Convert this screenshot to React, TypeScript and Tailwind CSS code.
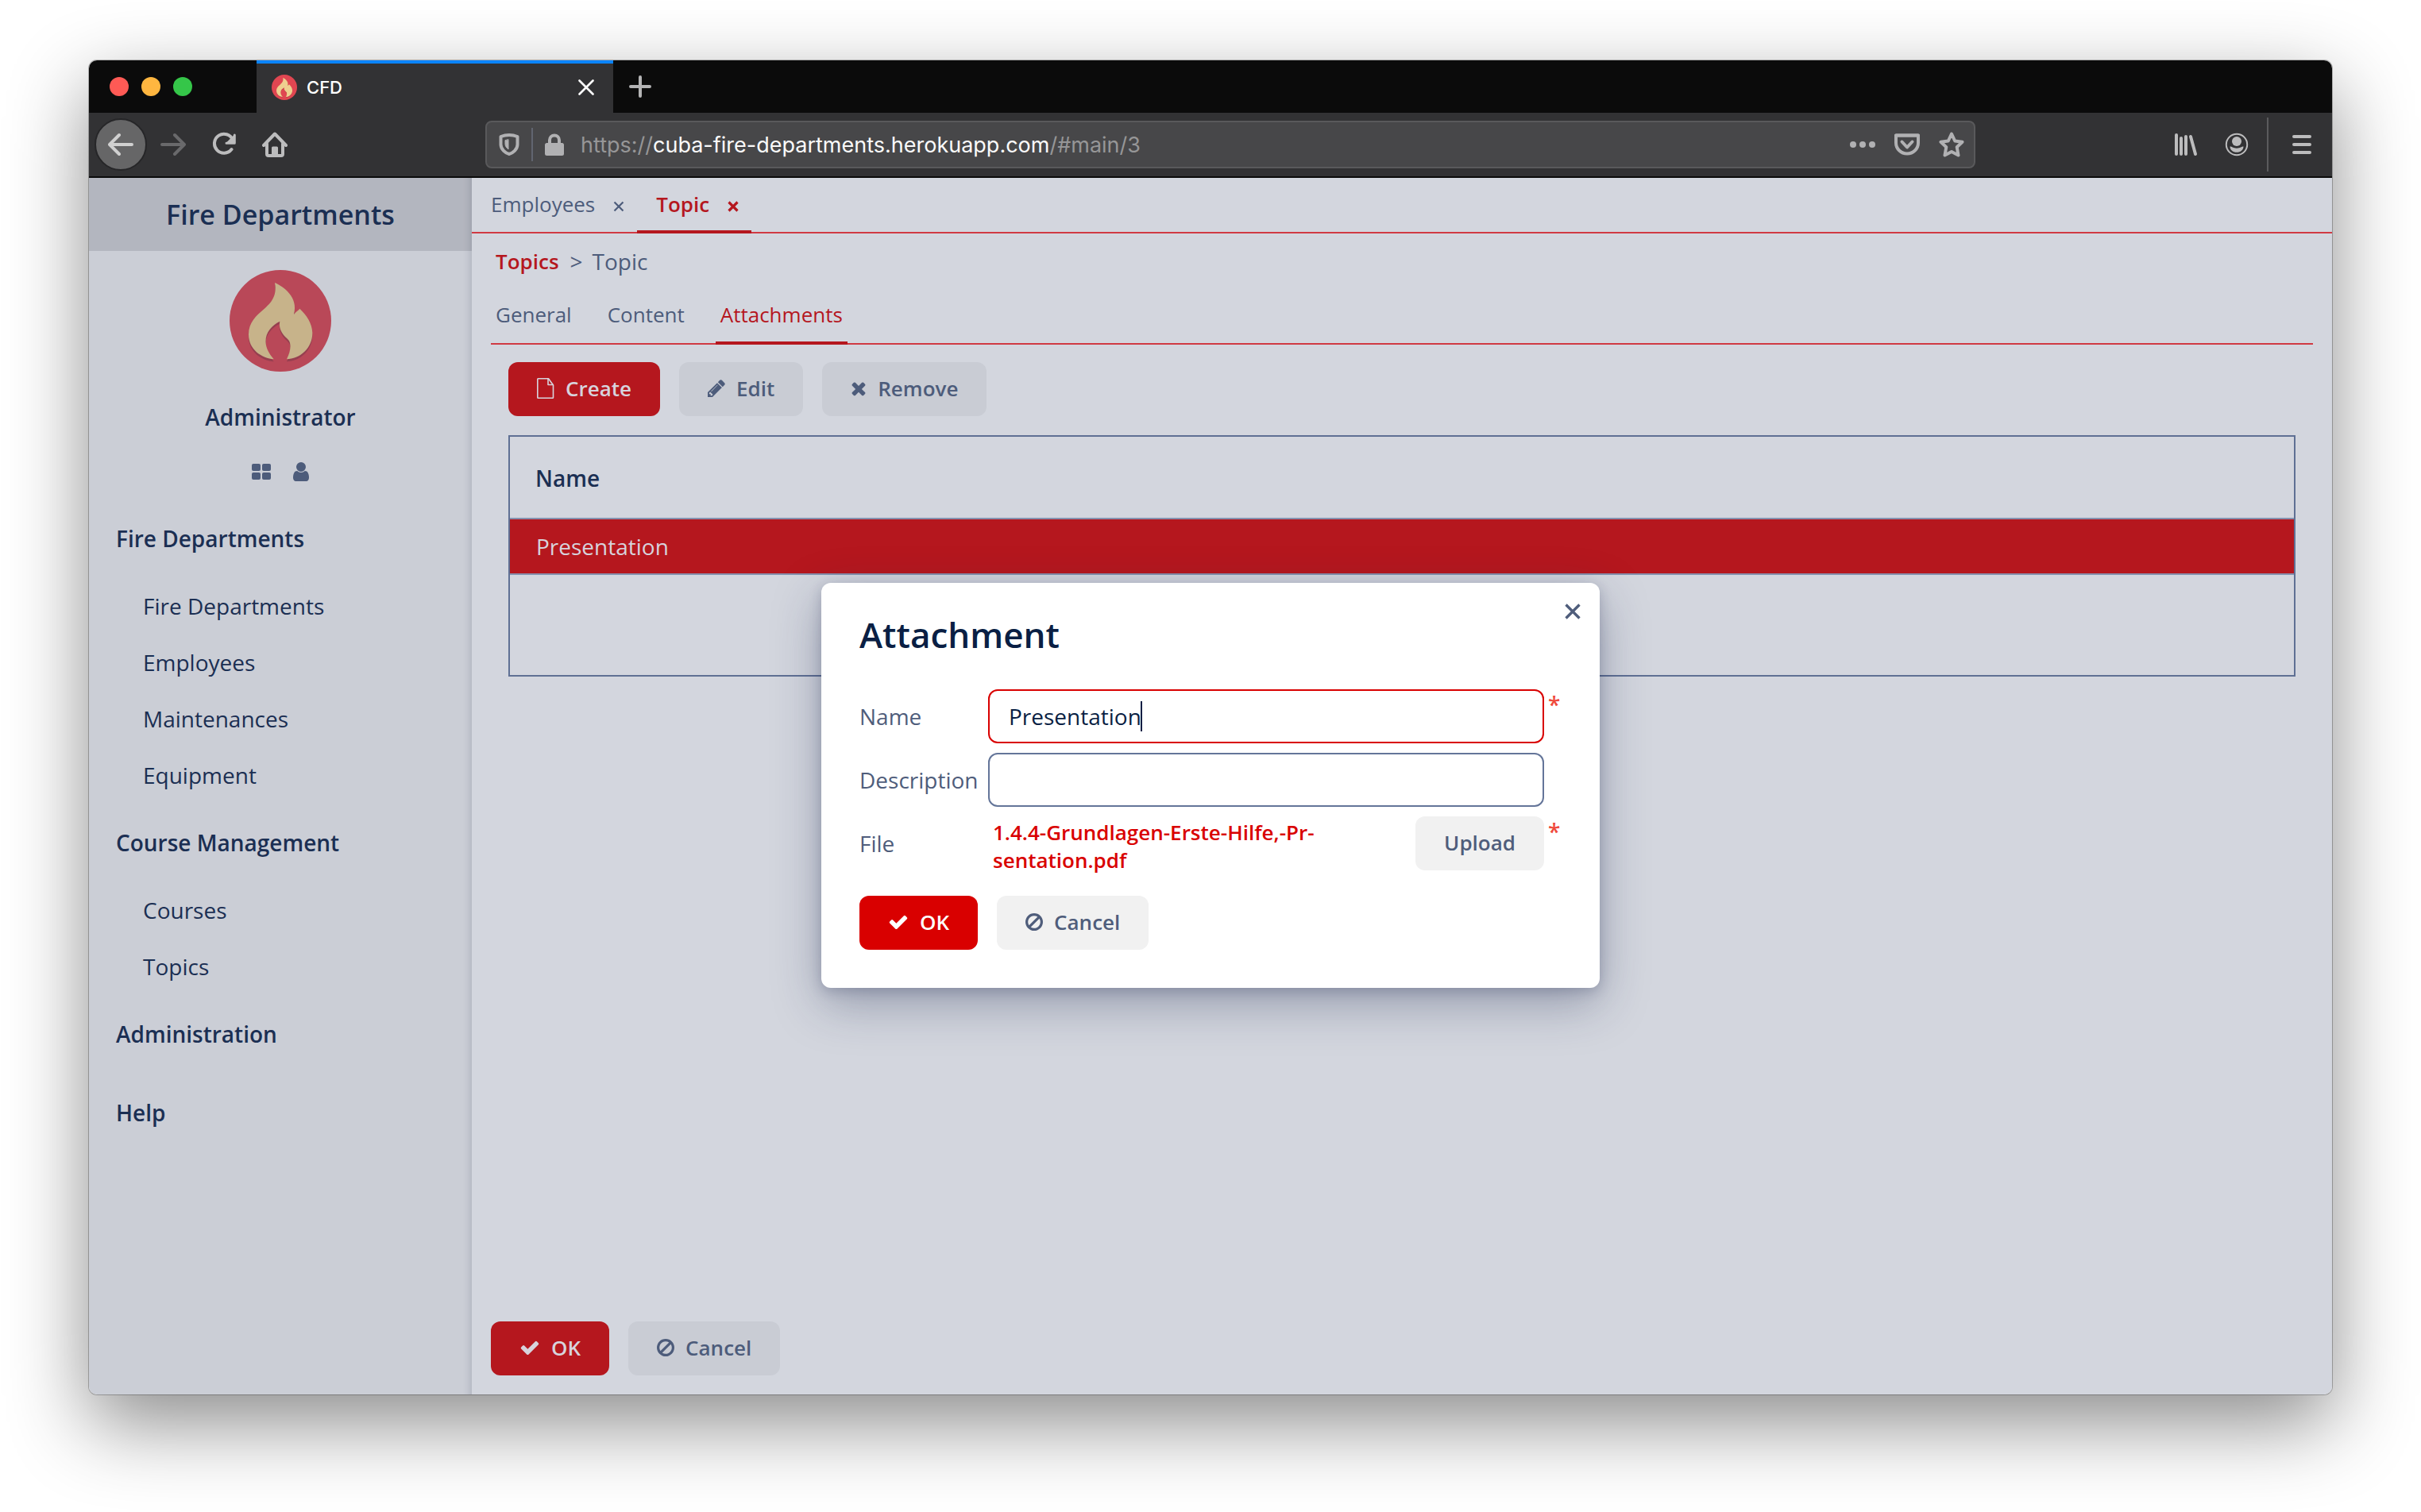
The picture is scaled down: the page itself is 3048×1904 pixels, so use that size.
import type { ReactNode } from "react";

type IconProps = { className?: string };

/* Glyph icons drawn on a 1792-unit em */
const CHECK =
  "M1671 566q0 40-28 68l-724 724-136 136q-28 28-68 28t-68-28l-136-136-362-362q-28-28-28-68t28-68l136-136q28-28 68-28t68 28l294 295 656-657q28-28 68-28t68 28l136 136q28 28 28 68z";
const TIMES =
  "M1490 1322q0 40-28 68l-136 136q-28 28-68 28t-68-28l-294-294-294 294q-28 28-68 28t-68-28l-136-136q-28-28-28-68t28-68l294-294-294-294q-28-28-28-68t28-68l136-136q28-28 68-28t68 28l294 294 294-294q28-28 68-28t68 28l136 136q28 28 28 68t-28 68l-294 294 294 294q28 28 28 68z";
const BAN =
  "M1440 893q0-161-87-295l-754 753q137 89 297 89 111 0 211.5-43.5t173.5-116.5 116-174.5 43-212.5zm-999 299l755-754q-135-91-300-91-148 0-273 73t-198 199-73 274q0 162 89 299zm1223-299q0 157-61 300t-163.5 246-245 164-298.5 61-298.5-61-245-164-163.5-246-61-300 61-299.5 163.5-245.5 245-164 298.5-61 298.5 61 245 164 163.5 245.5 61 299.5z";
const PENCIL =
  "M491 1536l91-91-235-235-91 91v107h128v128h107zm523-928q0-22-22-22-10 0-17 7l-542 542q-7 7-7 17 0 22 22 22 10 0 17-7l542-542q7-7 7-17zm-54-192l416 416-832 832h-416v-416zm683 96q0 53-37 90l-166 166-416-416 166-165q36-38 90-38 53 0 91 38l235 234q37 39 37 91z";
const USER =
  "M1536 1399q0 109-62.5 187t-150.5 78h-854q-88 0-150.5-78t-62.5-187q0-85 8.5-160.5t31.5-152 58.5-131 94-89 134.5-34.5q131 128 313 128t313-128q76 0 134.5 34.5t94 89 58.5 131 31.5 152 8.5 160.5zm-256-887q0 159-112.5 271.5t-271.5 112.5-271.5-112.5-112.5-271.5 112.5-271.5 271.5-112.5 271.5 112.5 112.5 271.5z";

function CheckIcon() {
  return (
    <svg viewBox="0 0 1792 1792" className="h-[26px] w-[26px] fill-current" aria-hidden="true">
      <path d={CHECK} />
    </svg>
  );
}
function TimesIcon() {
  return (
    <svg viewBox="192 0 1408 1792" className="h-[26px] w-5 fill-current" aria-hidden="true">
      <path d={TIMES} />
    </svg>
  );
}
function BanIcon() {
  return (
    <svg viewBox="128 0 1536 1792" className="h-[26px] w-[22px] fill-current" aria-hidden="true">
      <path d={BAN} />
    </svg>
  );
}
function PencilIcon() {
  return (
    <svg viewBox="128 0 1536 1792" className="h-[26px] w-[22px] fill-current" aria-hidden="true">
      <path d={PENCIL} />
    </svg>
  );
}
function UserIcon() {
  return (
    <svg viewBox="256 128 1280 1536" className="h-6 w-5 fill-current" aria-hidden="true">
      <path d={USER} />
    </svg>
  );
}
function GridIcon() {
  return (
    <svg viewBox="0 0 24 24" className="h-6 w-6 fill-current" aria-hidden="true">
      <rect x="0" y="2" width="11" height="9" rx="2" />
      <rect x="13" y="2" width="11" height="9" rx="2" />
      <rect x="0" y="13" width="11" height="9" rx="2" />
      <rect x="13" y="13" width="11" height="9" rx="2" />
    </svg>
  );
}
function FileIcon() {
  return (
    <svg viewBox="0 0 22 26" className="h-[26px] w-[22px]" fill="none" stroke="currentColor" strokeWidth="1.6" strokeLinejoin="round" aria-hidden="true">
      <path d="M1.5 .8h13l6 8.2v15.500a.7.7 0 0 1-.7.700H1.500a.7.7 0 0 1-.7-.7V1.500a.7.7 0 0 1 .7-.7z" />
      <path d="M14 1v7.500h6.500" />
    </svg>
  );
}

const FLAME =
  "M57 16C68 21 87 34 81 56C84 52 87 51 88.300 48.700C97 57 104 67 104.300 79C104.500 99 88 112 72 112.300C75 106 76.500 101 76.500 96C76.500 88 73 87.500 69 83C64 77 62 71 63.300 64.700C53 70 45.500 78 45.500 90C45.500 98 50 106 55.700 112.300C41 111 24 101 24 81C24 66 34 57 43 49.500C53 41 60 32 57 16Z";

function FlameLogo({ className, faded }: IconProps & { faded?: boolean }) {
  return (
    <svg viewBox="0 0 128 128" className={className} aria-hidden="true">
      <circle cx="64" cy="64" r="64" fill={faded ? "#b94858" : "#e04651"} />
      <path d={FLAME} transform="translate(0 3)" fill={faded ? "#963f50" : "#b83a46"} />
      <path d={FLAME} fill={faded ? "#c7b38a" : "#efcf8f"} />
    </svg>
  );
}

function ToolIcon({ children, className }: { children: ReactNode; className?: string }) {
  return (
    <svg
      viewBox="0 0 32 32"
      className={className ?? "h-8 w-8"}
      fill="none"
      stroke="currentColor"
      strokeWidth="4"
      strokeLinecap="round"
      strokeLinejoin="round"
      aria-hidden="true"
    >
      {children}
    </svg>
  );
}

type Tone = "primary" | "plain" | "primaryDim" | "plainDim";
const TONES: Record<Tone, string> = {
  primary: "bg-[#d90000] text-white",
  plain: "bg-[#f1f1f1] text-[#4f5d7b]",
  primaryDim: "bg-[#b5171e] text-[#d7d3dc]",
  plainDim: "bg-[#c9ccd4] text-[#4d5c7b]",
};

function Button({ tone, icon, children }: { tone: Tone; icon?: ReactNode; children: ReactNode }) {
  return (
    <button
      type="button"
      className={`flex h-[68px] shrink-0 items-center gap-3.5 rounded-xl px-9 pb-0.5 text-[26px] leading-9 font-semibold ${TONES[tone]}`}
    >
      {icon}
      {children}
    </button>
  );
}

function TitleBar() {
  return (
    <div className="flex h-[66px] bg-[#0b0b0b]">
      <div className="flex w-[211px] items-center gap-4 pl-[26px]">
        <button type="button" aria-label="Close window" className="h-6 w-6 rounded-full bg-[#ff5a55]" />
        <button type="button" aria-label="Minimize window" className="h-6 w-6 rounded-full bg-[#ffb640]" />
        <button type="button" aria-label="Zoom window" className="h-6 w-6 rounded-full bg-[#35c649]" />
      </div>
      <div className="flex w-[449px] items-center border-t-4 border-[#0a84ff] bg-[#323234] pr-6 pb-0.5 pl-[19px]">
        <FlameLogo className="h-8 w-8" />
        <span className="ml-3 flex-1 font-[Inter] text-[22px] leading-7 font-medium text-white">CFD</span>
        <button type="button" aria-label="Close tab" className="text-white">
          <svg viewBox="0 0 20 20" className="h-5 w-5" stroke="currentColor" strokeWidth="2.6" strokeLinecap="round">
            <path d="M1.500 1.500l17 17M18.500 1.500l-17 17" />
          </svg>
        </button>
      </div>
      <button type="button" aria-label="New tab" className="ml-5 text-[#b4b4b5]">
        <svg viewBox="0 0 28 28" className="h-7 w-7" stroke="currentColor" strokeWidth="4" strokeLinecap="round">
          <path d="M14 2v24M2 14h24" />
        </svg>
      </button>
    </div>
  );
}

function Toolbar() {
  return (
    <div className="flex h-[82px] items-center border-b-2 border-[#0b0b0b] bg-[#323234] text-[#bcbcbd]">
      <button
        type="button"
        aria-label="Back"
        className="ml-[7px] flex h-[66px] w-[66px] items-center justify-center rounded-full border-2 border-[#262628] bg-[#666667] text-[#d0d0d0]"
      >
        <ToolIcon>
          <path d="M30 16H3M14 4L2 16l12 12" />
        </ToolIcon>
      </button>
      <button type="button" aria-label="Forward" className="ml-[17px] text-[#69696b]">
        <ToolIcon>
          <path d="M2 16h27M18 4l12 12-12 12" />
        </ToolIcon>
      </button>
      <button type="button" aria-label="Reload" className="ml-8">
        <ToolIcon>
          <path d="M25.500 22A12 12 0 1 1 27 10" />
          <path d="M29.300 4v10.300H19" strokeWidth="3" />
          <path d="M29 5v9h-9z" fill="currentColor" strokeWidth="2" />
        </ToolIcon>
      </button>
      <button type="button" aria-label="Home" className="ml-8">
        <ToolIcon>
          <path d="M2 17L16 2.500 30 17" />
          <path d="M6 15v13a2 2 0 0 0 2 2h16a2 2 0 0 0 2-2V15" />
          <path d="M13.500 29v-9h5v9z" fill="currentColor" strokeWidth="3" />
        </ToolIcon>
      </button>

      <div className="ml-[249px] flex h-[60px] flex-1 items-center rounded-lg border-2 border-[#59595b] bg-[#474749] text-[#b1b1b3]">
        <ToolIcon className="ml-3 h-8 w-8">
          <path d="M16 4C12 4 8 5 5.500 6v10c0 6 6 11 10.500 12 4.500-1 10.500-6 10.500-12V6C24 5 20 4 16 4z" />
          <path d="M15 10v12c-2.500-2-4-4-4-7v-4z" fill="currentColor" strokeWidth="1" />
        </ToolIcon>
        <span className="ml-3 h-[42px] w-0.5 bg-[#616570]" />
        <svg viewBox="0 0 26 28" className="ml-3.5 h-7 w-[26px]" fill="none" stroke="currentColor" aria-hidden="true">
          <path d="M7 14V8.500a6 6 0 0 1 12 0V14" strokeWidth="4" />
          <rect x="1" y="12" width="24" height="16" rx="2.500" fill="currentColor" stroke="none" />
        </svg>
        <p className="ml-5 flex-1 pt-0.5 font-[Inter] text-[27px] leading-9 text-[#969697]">
          https://<span className="text-[#fafafa]">cuba-fire-departments.herokuapp.com</span>/#main/3
        </p>
        <div className="mr-3 flex items-center gap-6">
          <button type="button" aria-label="Page actions">
            <svg viewBox="0 0 32 32" className="h-8 w-8 fill-current">
              <circle cx="4" cy="16" r="4" />
              <circle cx="16" cy="16" r="4" />
              <circle cx="28" cy="16" r="4" />
            </svg>
          </button>
          <button type="button" aria-label="Save to Pocket">
            <ToolIcon>
              <path d="M2 4.500h28V14a14 13.500 0 0 1-28 0z" />
              <path d="M2 4.500h28" />
              <path d="M9.500 12.500l6.500 7 6.500-7" />
            </ToolIcon>
          </button>
          <button type="button" aria-label="Bookmark this page">
            <ToolIcon>
              <path d="M16 2.500l4.200 9 9.300 1.200-6.800 6.500 1.800 10.300L16 25l-8.500 4.500 1.800-10.300-6.800-6.500 9.300-1.200z" />
            </ToolIcon>
          </button>
        </div>
      </div>

      <button type="button" aria-label="Library" className="ml-[249px]">
        <ToolIcon>
          <path d="M4 4v24M10 8v20M16 6v22M22 6l6 22" />
        </ToolIcon>
      </button>
      <button type="button" aria-label="Account" className="ml-8">
        <ToolIcon>
          <circle cx="16" cy="16" r="13.200" strokeWidth="2" />
          <circle cx="16" cy="12" r="6" fill="currentColor" stroke="none" />
          <path d="M7.500 18.500c2.500 0 4 2.200 8.500 2.200s6-2.200 8.500-2.200c0 4.500-4 7.300-8.500 7.300s-8.500-2.800-8.500-7.300z" fill="currentColor" stroke="none" />
        </ToolIcon>
      </button>
      <span className="ml-[22px] h-[68px] w-0.5 bg-[#5b5b5d]" />
      <button type="button" aria-label="Menu" className="mr-[22px] ml-[26px]">
        <ToolIcon>
          <path d="M6 6h20M6 16h20M6 26h20" />
        </ToolIcon>
      </button>
    </div>
  );
}

const MENU: { title: string; items: string[] }[] = [
  { title: "Fire Departments", items: ["Fire Departments", "Employees", "Maintenances", "Equipment"] },
  { title: "Course Management", items: ["Courses", "Topics"] },
  { title: "Administration", items: [] },
  { title: "Help", items: [] },
];

function Sidebar() {
  return (
    <aside className="flex w-[482px] shrink-0 flex-col bg-[#cbced6] text-[28px] leading-[39px] text-[#1b2f53] shadow-[inset_-12px_0_10px_-10px_rgba(40,50,80,0.18)]">
      <h1 className="bg-[#2d323c]/15 py-6 text-center text-[34px] leading-[44px] font-semibold">Fire Departments</h1>
      <div className="flex flex-col items-center pt-6">
        <FlameLogo className="h-32 w-32" faded />
        <p className="mt-[38px] font-semibold">Administrator</p>
        <div className="mt-[37px] flex items-center gap-7 text-[#4d5c7b]">
          <button type="button" aria-label="Dashboard">
            <GridIcon />
          </button>
          <button type="button" aria-label="User settings">
            <UserIcon />
          </button>
        </div>
      </div>
      <nav className="mt-[23px]">
        {MENU.map((group) => (
          <section key={group.title}>
            <h2 className="py-[30px] pl-[34px] font-semibold">{group.title}</h2>
            <ul>
              {group.items.map((item) => (
                <li key={item} className="py-4 pl-[68px]">
                  <a href="#main">{item}</a>
                </li>
              ))}
            </ul>
          </section>
        ))}
      </nav>
    </aside>
  );
}

function ScreenTab({ label, active }: { label: string; active?: boolean }) {
  return (
    <div
      className={`flex h-[70px] items-center gap-[23px] border-b-4 pr-4 pl-6 ${
        active ? "border-[#b5171e] font-semibold text-[#b5171e]" : "border-transparent"
      }`}
    >
      <button type="button" role="tab" aria-selected={!!active}>
        {label}
      </button>
      <button type="button" aria-label={`Close ${label}`} className="pt-1.5">
        <svg viewBox="0 0 14 14" className="h-3.5 w-3.5" stroke="currentColor" strokeWidth={active ? 3.2 : 2.2}>
          <path d="M1.500 1.500l11 11M12.500 1.500l-11 11" />
        </svg>
      </button>
    </div>
  );
}

const SUB_TABS = ["General", "Content", "Attachments"];

function TopicScreen() {
  return (
    <main className="flex min-w-0 flex-1 flex-col bg-[#d3d6de] text-[26px] leading-9 text-[#4d5c7b]">
      <div role="tablist" className="flex shadow-[inset_0_-2px_0_#d03a43]">
        <ScreenTab label="Employees" />
        <ScreenTab label="Topic" active />
      </div>

      <div className="flex flex-1 flex-col px-6 pb-6">
        <nav aria-label="Breadcrumb" className="flex h-[70px] items-center gap-3 pl-1.5">
          <a href="#topics" className="mr-0.5 font-semibold text-[#b5171e]">
            Topics
          </a>
          <span className="text-[28px]">&gt;</span>
          <span className="text-[28px]">Topic</span>
        </nav>

        <div role="tablist" className="flex gap-[33px] shadow-[inset_0_-2px_0_#d03a43]">
          {SUB_TABS.map((label) => (
            <button
              key={label}
              type="button"
              role="tab"
              aria-selected={label === "Attachments"}
              className={`h-[70px] border-b-4 px-1.5 pb-0.5 ${
                label === "Attachments" ? "border-[#b5171e] text-[#b5171e]" : "border-transparent"
              }`}
            >
              {label}
            </button>
          ))}
        </div>

        <div className="flex flex-col gap-6 px-[22px] pt-[22px]">
          <div className="flex gap-6">
            <Button tone="primaryDim" icon={<FileIcon />}>Create</Button>
            <Button tone="plainDim" icon={<PencilIcon />}>Edit</Button>
            <Button tone="plainDim" icon={<TimesIcon />}>Remove</Button>
          </div>
          <div className="border-2 border-[#5f7094] pb-[126px] text-[28px]">
            <table className="w-full border-separate border-spacing-0 text-left">
              <thead>
                <tr>
                  <th className="h-[104px] border-b-2 border-[#8591ae] px-8 pt-0.5 font-semibold text-[#1b2f53]">Name</th>
                </tr>
              </thead>
              <tbody>
                <tr>
                  <td className="h-[70px] border-b-2 border-[#8591ae] bg-[#b5171e] px-[33px] text-[#d7d3dc]">Presentation</td>
                </tr>
              </tbody>
            </table>
          </div>
        </div>

        <div className="mt-auto flex gap-6">
          <Button tone="primaryDim" icon={<CheckIcon />}>OK</Button>
          <Button tone="plainDim" icon={<BanIcon />}>Cancel</Button>
        </div>
      </div>
    </main>
  );
}

function Required() {
  return <span className="self-start pl-[5px] font-semibold text-[#f04a3c]">*</span>;
}

function AttachmentDialog() {
  return (
    <div
      role="dialog"
      aria-labelledby="dialog-title"
      className="relative w-[980px] rounded-xl bg-white px-12 pt-[35px] pb-12 text-[28px] leading-[38px] text-[#4f5d7b] shadow-[0_20px_60px_rgba(30,40,80,0.34),0_4px_16px_rgba(30,40,80,0.22)]"
    >
      <button type="button" aria-label="Close dialog" className="absolute top-[26px] right-6">
        <svg viewBox="0 0 20 20" className="h-5 w-5" stroke="currentColor" strokeWidth="3.4">
          <path d="M1.500 1.500l17 17M18.500 1.500l-17 17" />
        </svg>
      </button>
      <h2 id="dialog-title" className="text-[44px] leading-[60px] font-semibold text-[#0a1f44]">
        Attachment
      </h2>
      <form className="mt-[39px] grid grid-cols-[162px_1fr_22px] items-center gap-y-3">
        <label htmlFor="attachment-name">Name</label>
        <div className="relative">
          <input
            id="attachment-name"
            defaultValue="Presentation"
            className="block h-[68px] w-full rounded-xl border-2 border-[#d90000] bg-white px-6 text-[#0a1f44] caret-transparent outline-none"
          />
          <span className="absolute top-[15px] left-48 h-[38px] w-0.5 bg-[#0a1f44]" />
        </div>
        <Required />

        <label htmlFor="attachment-description">Description</label>
        <input
          id="attachment-description"
          className="block h-[68px] w-full rounded-xl border-2 border-[#647599] bg-white px-6 text-[#0a1f44] outline-none"
        />
        <span />

        <span>File</span>
        <div className="flex h-[68px] justify-between gap-6 pl-1.5">
          <a href="#download" className="pt-[3px] text-[26px] leading-[35px] font-semibold text-[#d90000]">
            1.4.4-Grundlagen-Erste-Hilfe,-Pr-sentation.pdf
          </a>
          <Button tone="plain">Upload</Button>
        </div>
        <Required />
      </form>
      <div className="mt-8 flex gap-6">
        <Button tone="primary" icon={<CheckIcon />}>OK</Button>
        <Button tone="plain" icon={<BanIcon />}>Cancel</Button>
      </div>
    </div>
  );
}

export default function App() {
  return (
    <div className="flex min-h-screen flex-col bg-white px-28 pt-[76px] pb-[148px] font-['Open_Sans',sans-serif]">
      <div className="flex flex-1 flex-col overflow-hidden rounded-[10px] shadow-[0_0_0_1px_rgba(0,0,0,0.25),0_36px_100px_rgba(0,0,0,0.46)]">
        <TitleBar />
        <Toolbar />
        <div className="relative flex flex-1">
          <Sidebar />
          <TopicScreen />
          <div className="absolute inset-0 flex items-center justify-center pb-0.5">
            <AttachmentDialog />
          </div>
        </div>
      </div>
    </div>
  );
}
